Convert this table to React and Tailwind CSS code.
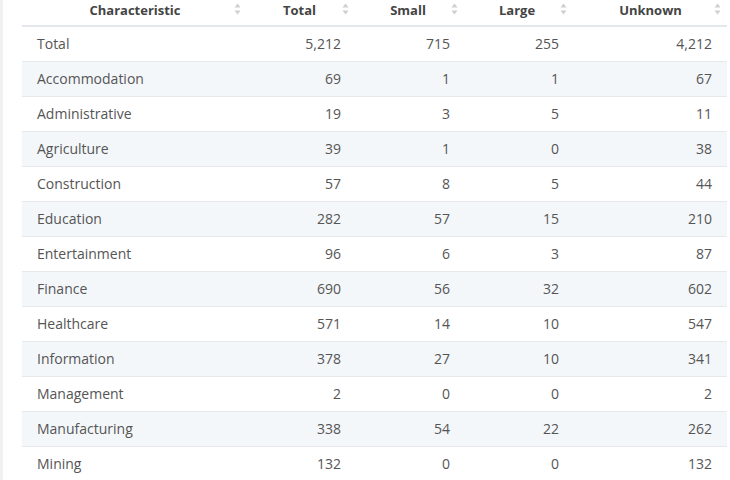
import React from 'react'

const rows = [
  ['Total', '5,212', '715', '255', '4,212'],
  ['Accommodation', '69', '1', '1', '67'],
  ['Administrative', '19', '3', '5', '11'],
  ['Agriculture', '39', '1', '0', '38'],
  ['Construction', '57', '8', '5', '44'],
  ['Education', '282', '57', '15', '210'],
  ['Entertainment', '96', '6', '3', '87'],
  ['Finance', '690', '56', '32', '602'],
  ['Healthcare', '571', '14', '10', '547'],
  ['Information', '378', '27', '10', '341'],
  ['Management', '2', '0', '0', '2'],
  ['Manufacturing', '338', '54', '22', '262'],
  ['Mining', '132', '0', '0', '132'],
]

const headers = ['Characteristic', 'Total', 'Small', 'Large', 'Unknown']

function SortIcon({ right }) {
  return (
    <svg
      width="7"
      height="12"
      viewBox="0 0 7 12"
      className={`absolute top-[3px] ${right}`}
    >
      <path d="M3.5 0.5 L6.5 4.5 L0.5 4.5 Z" fill="#cfcfcf" />
      <path d="M3.5 11.5 L6.5 7.5 L0.5 7.5 Z" fill="#cfcfcf" />
    </svg>
  )
}

export default function App() {
  const cols = 'grid grid-cols-[221px_108px_109px_109px_158px]'
  return (
    <div className="flex w-[730px] h-[480px] overflow-hidden bg-white font-['Open_Sans',sans-serif]">
      <div className="w-[3px] shrink-0 bg-[#f1f1f4]" />
      <div className="ml-[19px] w-[705px]">
        <div className={`${cols} h-[27px] border-b-2 border-[#e4e7eb]`}>
          {headers.map((h, i) => (
            <div key={h} className="relative pl-[10px] pr-[5px] text-center text-[13px] font-bold leading-[20px] text-[#444]">
              {h}
              <SortIcon right={i === 4 ? 'right-[6px]' : 'right-[2px]'} />
            </div>
          ))}
        </div>
        {rows.map((r, idx) => (
          <div
            key={r[0]}
            className={`${cols} h-[35px] items-center pb-[1px] border-b border-[#e6e8ec] text-[14px] text-[#555] ${idx % 2 === 1 ? 'bg-[#f4f7fa]' : 'bg-white'}`}
          >
            <div className="pl-[15px]">{r[0]}</div>
            <div className="text-right pr-[10px]">{r[1]}</div>
            <div className="text-right pr-[10px]">{r[2]}</div>
            <div className="text-right pr-[10px]">{r[3]}</div>
            <div className="text-right pr-[15px]">{r[4]}</div>
          </div>
        ))}
      </div>
    </div>
  )
}
